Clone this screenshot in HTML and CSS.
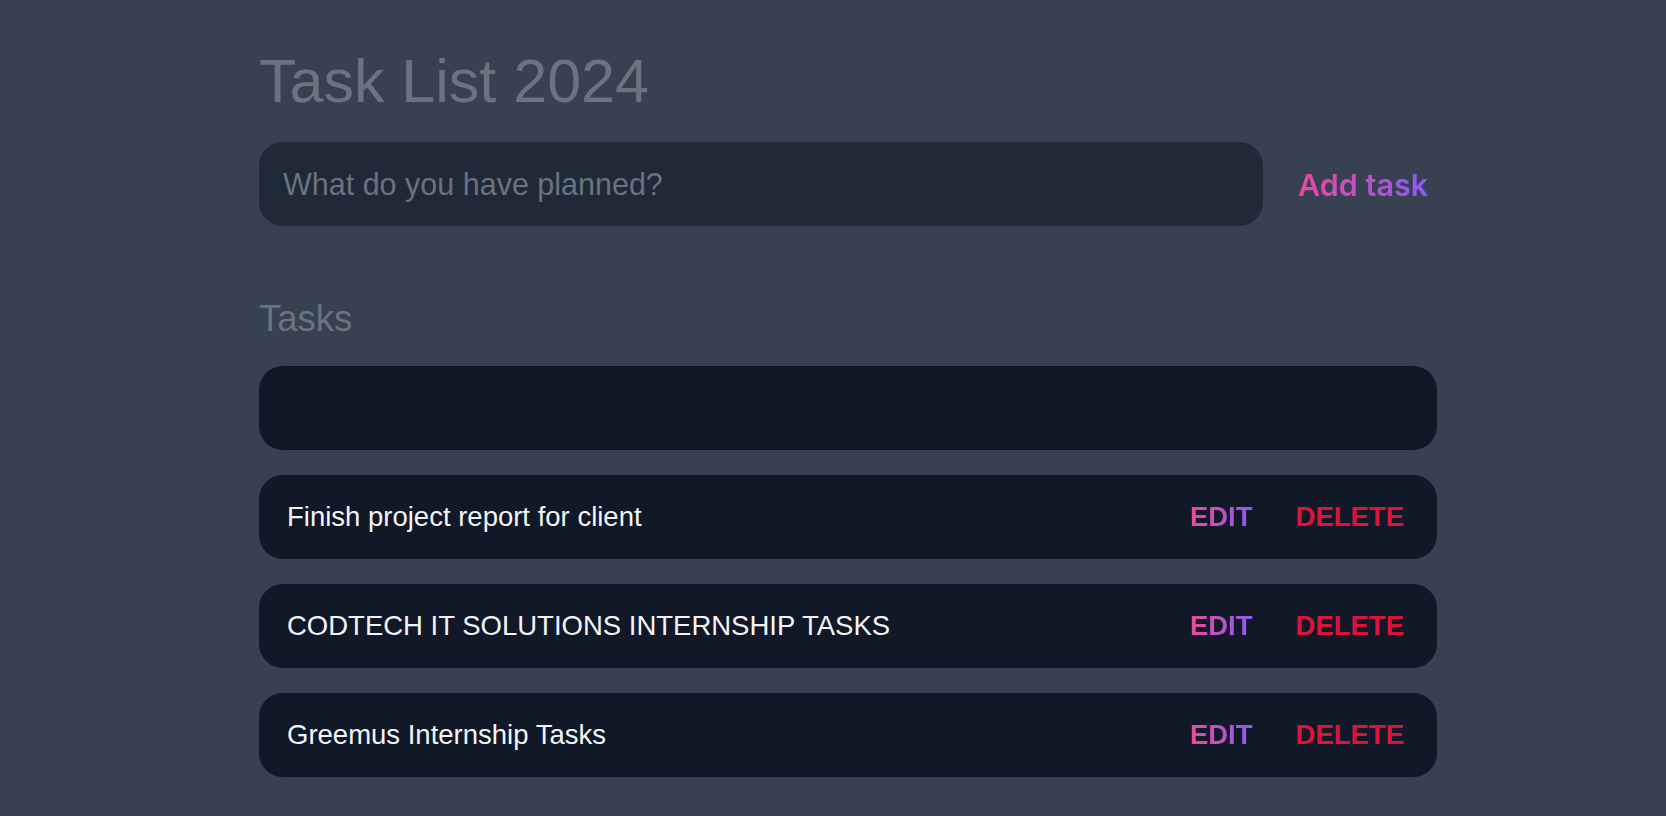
FILE: index.html
```html
<!DOCTYPE html>
<html lang="en">
<head>
<meta charset="utf-8">
<title>Task List 2024</title>
<link rel="stylesheet" href="styles.css">
</head>
<body>
<main class="app">
  <header class="header">
    <h1 class="title">Task List 2024</h1>
    <form class="new-task" onsubmit="return false;">
      <input class="new-task-input" type="text" placeholder="What do you have planned?">
      <button class="add-btn" type="submit"><span class="grad">Add task</span></button>
    </form>
  </header>
  <section class="tasks">
    <h2 class="tasks-title">Tasks</h2>
    <div class="task-list">
      <div class="task empty"></div>
      <div class="task">
        <span class="task-text">Finish project report for client</span>
        <div class="actions">
          <button class="edit"><span class="grad">EDIT</span></button>
          <button class="delete">DELETE</button>
        </div>
      </div>
      <div class="task">
        <span class="task-text">CODTECH IT SOLUTIONS INTERNSHIP TASKS</span>
        <div class="actions">
          <button class="edit"><span class="grad">EDIT</span></button>
          <button class="delete">DELETE</button>
        </div>
      </div>
      <div class="task">
        <span class="task-text">Greemus Internship Tasks</span>
        <div class="actions">
          <button class="edit"><span class="grad">EDIT</span></button>
          <button class="delete">DELETE</button>
        </div>
      </div>
    </div>
  </section>
</main>
</body>
</html>
```

FILE: styles.css
```css
* { box-sizing: border-box; }

html, body {
  margin: 0;
  padding: 0;
  background: #374151;
  font-family: "Liberation Sans", Arial, sans-serif;
  height: 100%;
  overflow: hidden;
}

.app {
  width: 1178px;
  margin-left: 259px;
  padding-top: 47px;
}

.title {
  margin: 0;
  font-size: 61px;
  font-weight: 400;
  line-height: 69px;
  color: #6b7280;
}

.new-task {
  margin-top: 26px;
  display: flex;
  align-items: center;
}

.new-task-input {
  width: 1004px;
  height: 84px;
  border: none;
  outline: none;
  border-radius: 24px;
  background: #1f2937;
  color: #f3f4f6;
  padding: 0 24px;
  font-family: "Liberation Sans", Arial, sans-serif;
  font-size: 30.5px;
}

.new-task-input::placeholder {
  color: #6b7280;
}

.add-btn {
  flex: 1;
  height: 84px;
  border: none;
  background: transparent;
  text-align: left;
  padding: 0 0 0 35px;
  font-family: "Inter", "Open Sans", sans-serif;
  font-size: 30.5px;
  font-weight: 600;
  cursor: pointer;
}

.grad {
  background: linear-gradient(90deg, #ec4899, #8b5cf6);
  -webkit-background-clip: text;
  background-clip: text;
  color: transparent;
}

.tasks {
  margin-top: 72px;
}

.tasks-title {
  margin: 0;
  font-size: 36.5px;
  font-weight: 400;
  line-height: 41px;
  color: #6b7280;
}

.task-list {
  margin-top: 27px;
  display: flex;
  flex-direction: column;
  gap: 25px;
}

.task {
  height: 84px;
  border-radius: 24px;
  background: #111827;
  display: flex;
  align-items: center;
  justify-content: space-between;
  padding: 0 33px 0 28px;
}

.task-text {
  font-size: 27.5px;
  color: #f3f4f6;
}

.actions {
  display: flex;
  align-items: center;
  gap: 43px;
}

.actions button {
  border: none;
  background: transparent;
  padding: 0;
  font-family: "Liberation Sans", Arial, sans-serif;
  font-size: 27.5px;
  font-weight: 700;
  cursor: pointer;
}

.delete {
  color: #dc143c;
}
```
